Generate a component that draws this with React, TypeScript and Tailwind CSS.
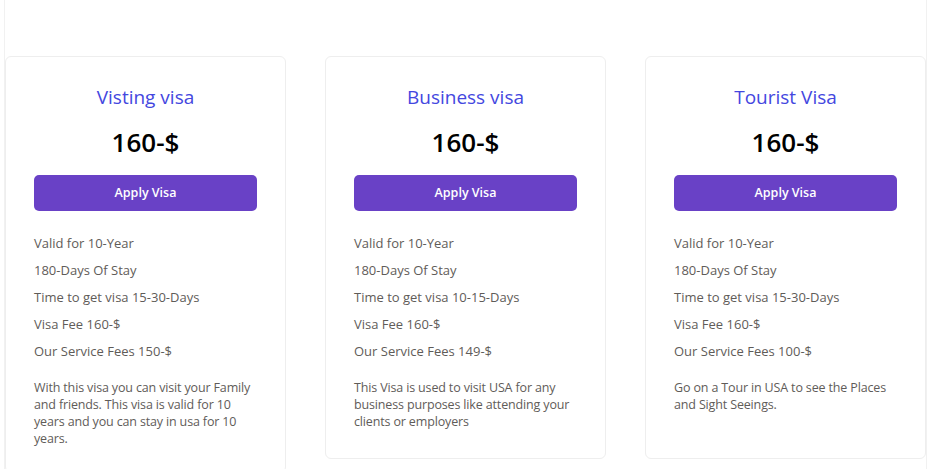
const visas = [
  {
    title: "Visting visa",
    price: "160-$",
    time: "15-30-Days",
    service: "150-$",
    about:
      "With this visa you can visit your Family and friends. This visa is valid for 10 years and you can stay in usa for 10 years.",
  },
  {
    title: "Business visa",
    price: "160-$",
    time: "10-15-Days",
    service: "149-$",
    about:
      "This Visa is used to visit USA for any business purposes like attending your clients or employers",
  },
  {
    title: "Tourist Visa",
    price: "160-$",
    time: "15-30-Days",
    service: "100-$",
    about: "Go on a Tour in USA to see the Places and Sight Seeings.",
  },
];

export default function App() {
  return (
    <div className="min-h-screen bg-white font-['Open_Sans',sans-serif]">
      <section className="ml-[4px] w-[923px] border-x border-[#f1f1f1] pt-[56px] pb-4">
        {/* Visa Cards */}
        <div className="flex items-start gap-[39px]">
          {visas.map((visa) => (
            <div
              key={visa.title}
              className="w-[281px] min-h-[403px] rounded-md border border-[#eeeeee] bg-white px-7 pt-[26px] pb-[25px]"
            >
              <h3 className="text-center text-[19px] leading-[28px] text-[#4447df]">
                {visa.title}
              </h3>
              <p className="mt-[15px] text-center text-[26px] font-semibold leading-[32px] text-black">
                {visa.price}
              </p>
              <button className="mt-[17px] h-9 w-full rounded-[5px] bg-[#6941c6] text-[12.5px] font-semibold text-white">
                Apply Visa
              </button>

              <ul className="mt-[19px] text-[13px] leading-[27px] text-[#5f5c59]">
                <li>Valid for 10-Year</li>
                <li>180-Days Of Stay</li>
                <li>Time to get visa {visa.time}</li>
                <li>Visa Fee 160-$</li>
                <li>Our Service Fees {visa.service}</li>
              </ul>

              <p className="mt-[14px] text-[12.5px] leading-[17px] tracking-[-0.15px] text-[#5f5c59]">
                {visa.about}
              </p>
            </div>
          ))}
        </div>
      </section>
    </div>
  );
}
